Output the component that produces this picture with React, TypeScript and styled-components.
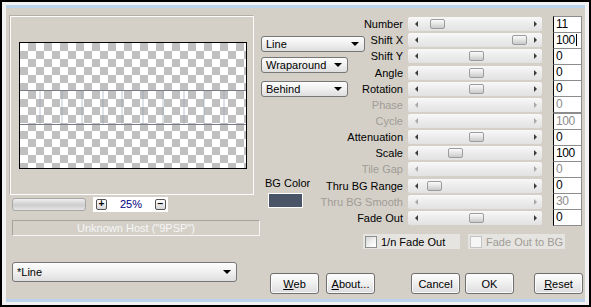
import React from 'react';
import styled, { createGlobalStyle } from 'styled-components';

const GlobalStyle = createGlobalStyle`
  html, body {
    margin: 0;
    padding: 0;
  }
  body {
    font-family: "Liberation Sans", Arial, sans-serif;
    font-size: 11px;
    color: #000;
    background: #000;
  }
`;

const Frame = styled.div`
  box-sizing: border-box;
  width: 591px;
  height: 307px;
  border: 2px solid #000;
  background: #f2f2f2;
  padding: 3px 4px;
`;

const Dialog = styled.div`
  box-sizing: border-box;
  height: 297px;
  border-top: 3px solid #bcd3ec;
  border-bottom: 3px solid #bcd3ec;
  background: #d4d0c8;
  padding: 8px 0 0 4px;
  display: flex;
`;

const LeftCol = styled.div`
  width: 250px;
  display: flex;
  flex-direction: column;
  align-items: flex-start;
`;

const GroupBox = styled.div`
  box-sizing: border-box;
  width: 244px;
  height: 179px;
  border: 1px solid #fdfdfd;
  box-shadow: -1px -1px 0 #b4b0a8;
  padding: 25px 0 0 8px;
`;

const Canvas = styled.div`
  box-sizing: border-box;
  width: 228px;
  height: 127px;
  border: 1px solid #000;
  background-color: #fff;
  background-image:
    linear-gradient(45deg, #c0c0c0 25%, transparent 25%, transparent 75%, #c0c0c0 75%),
    linear-gradient(45deg, #c0c0c0 25%, transparent 25%, transparent 75%, #c0c0c0 75%);
  background-size: 16px 16px;
  background-position: 0 0, 8px 8px;

  svg {
    display: block;
  }
`;

const ZoomRow = styled.div`
  display: flex;
  align-items: center;
  margin: 2px 0 0 2px;
  height: 14px;
`;

const ZoomSlider = styled.div`
  box-sizing: border-box;
  width: 74px;
  height: 13px;
  border: 1px solid #a8a8a8;
  border-radius: 3px;
  background: linear-gradient(#f0f0f0, #d2d2d2 45%, #cfcfcf 60%, #e6e6e6);
`;

const ZoomBox = styled.div`
  box-sizing: border-box;
  width: 75px;
  height: 15px;
  margin-left: 7px;
  background: #fff;
  display: flex;
  align-items: center;
  justify-content: space-between;
  padding: 0 2px 0 3px;
`;

const ZoomButton = styled.div`
  box-sizing: border-box;
  width: 11px;
  height: 11px;
  border: 1px solid #555;
  border-radius: 2px;
  background: linear-gradient(#fff, #d8d8d8);
  font-size: 10px;
  font-weight: bold;
  line-height: 8px;
  text-align: center;
`;

const ZoomValue = styled.span`
  color: #000080;
  font-size: 11px;
`;

const InfoField = styled.div`
  box-sizing: border-box;
  width: 248px;
  height: 16px;
  margin: 9px 0 0 2px;
  border: 1px solid #a7a39b;
  border-right-color: #f4f4f4;
  border-bottom-color: #f4f4f4;
  color: #f6f6f6;
  text-align: center;
  line-height: 14px;
`;

const Select = styled.div<{ $w: number; $h?: number }>`
  box-sizing: border-box;
  width: ${(p) => p.$w}px;
  height: ${(p) => p.$h ?? 16}px;
  display: flex;
  align-items: center;
  justify-content: space-between;
  padding: 0 5px 0 4px;
  border: 1px solid #777;
  border-radius: 3px;
  background: linear-gradient(#fdfdfd, #f0f0f0 50%, #dedede);
  font-size: 11px;
`;

const SelectArrow = styled.span`
  width: 0;
  height: 0;
  border-left: 4px solid transparent;
  border-right: 4px solid transparent;
  border-top: 4px solid #000;
`;

const BottomSelect = styled(Select)`
  margin: 26px 0 0 2px;
`;

const RightCol = styled.div`
  flex: 1;
  display: flex;
  flex-direction: column;
`;

const SliderGrid = styled.div`
  display: grid;
  grid-template-columns: 148px 145px 29px;
  grid-template-rows: repeat(13, 16.17px);
`;

const MidCol = styled.div`
  grid-column: 1;
  grid-row: 1 / span 13;
  display: flex;
  flex-direction: column;
  align-items: flex-start;
`;

const LineSelect = styled(Select)`
  margin: 20px 0 0 1px;
`;

const WrapSelect = styled(Select)`
  margin: 5px 0 0 1px;
`;

const BehindSelect = styled(Select)`
  margin: 8px 0 0 1px;
`;

const BgLabel = styled.div`
  margin: 79px 0 0 5px;
  line-height: 14px;
`;

const Swatch = styled.div`
  box-sizing: border-box;
  width: 35px;
  height: 15px;
  margin: 3px 0 0 8px;
  border: 1px solid #fff;
  background: #4a5467;
`;

const Label = styled.div<{ $row: number; $off?: boolean }>`
  grid-column: 1;
  grid-row: ${(p) => p.$row};
  justify-self: end;
  align-self: center;
  padding-right: 5px;
  line-height: 14px;
  white-space: nowrap;
  color: ${(p) => (p.$off ? '#a09c96' : '#000')};
`;

const Track = styled.div<{ $row: number }>`
  grid-column: 2;
  grid-row: ${(p) => p.$row};
  align-self: center;
  position: relative;
  width: 134px;
  height: 14px;
  border-radius: 2px;
  background: linear-gradient(#f8f8f8, #ececec 50%, #e2e2e2);
  display: flex;
  align-items: center;
  justify-content: space-between;
  padding: 0 5px 0 7px;
  box-sizing: border-box;
`;

const ArrowLeft = styled.span<{ $off?: boolean }>`
  width: 0;
  height: 0;
  border-top: 3px solid transparent;
  border-bottom: 3px solid transparent;
  border-right: 3px solid ${(p) => (p.$off ? '#a8a8a8' : '#3c3c3c')};
`;

const ArrowRight = styled.span<{ $off?: boolean }>`
  width: 0;
  height: 0;
  border-top: 3px solid transparent;
  border-bottom: 3px solid transparent;
  border-left: 3px solid ${(p) => (p.$off ? '#a8a8a8' : '#3c3c3c')};
`;

const Thumb = styled.span<{ $left: number }>`
  position: absolute;
  top: 2px;
  left: ${(p) => p.$left}px;
  box-sizing: border-box;
  width: 15px;
  height: 10px;
  border: 1px solid #9c9c9c;
  border-radius: 2px;
  background: linear-gradient(#fbfbfb, #e4e4e4 50%, #c9c9c9);
`;

const ValueBox = styled.div<{ $row: number; $off?: boolean }>`
  grid-column: 3;
  grid-row: ${(p) => p.$row};
  align-self: center;
  box-sizing: border-box;
  width: 29px;
  height: 17px;
  background: #fff;
  border: 1px solid #8c8c8c;
  border-left-color: #000;
  padding-left: 2px;
  font-size: 12px;
  line-height: 15px;
  letter-spacing: -0.4px;
  color: ${(p) => (p.$off ? '#8c8c8c' : '#000')};
  display: flex;
  align-items: center;
`;

const Caret = styled.span`
  width: 1px;
  height: 12px;
  margin-left: 1px;
  background: #000;
`;

const CheckRow = styled.div`
  display: flex;
  margin: 8px 0 0 103px;
  gap: 8px;
`;

const CheckPanel = styled.div<{ $off?: boolean }>`
  box-sizing: border-box;
  width: 97px;
  height: 15px;
  background: #e6e4e0;
  display: flex;
  align-items: center;
  padding-left: 2px;
  gap: 4px;
  color: ${(p) => (p.$off ? '#a09c96' : '#000')};
  white-space: nowrap;
`;

const CheckBox = styled.span<{ $off?: boolean }>`
  box-sizing: border-box;
  width: 12px;
  height: 12px;
  border: 1px solid ${(p) => (p.$off ? '#c4c4c4' : '#8e8f8f')};
  background: ${(p) =>
    p.$off ? '#f6f6f6' : 'linear-gradient(135deg, #d8d8d8, #f8f8f8 70%, #fff)'};
`;

const ButtonRow = styled.div`
  display: flex;
  margin: 24px 0 0 10px;
`;

const Button = styled.div<{ $gap: number }>`
  box-sizing: border-box;
  width: 49px;
  height: 21px;
  margin-left: ${(p) => p.$gap}px;
  border: 1px solid #707070;
  border-radius: 3px;
  background: linear-gradient(#fefefe, #efefef 50%, #dcdcdc);
  box-shadow: inset 0 0 0 1px #fafafa;
  display: flex;
  align-items: center;
  justify-content: center;
  font-size: 11px;
`;

type Row = { label: string; value: string; thumb?: number; off?: boolean; caret?: boolean };

const rows: Row[] = [
  { label: 'Number', value: '11', thumb: 22 },
  { label: 'Shift X', value: '100', thumb: 104, caret: true },
  { label: 'Shift Y', value: '0', thumb: 61 },
  { label: 'Angle', value: '0', thumb: 61 },
  { label: 'Rotation', value: '0', thumb: 61 },
  { label: 'Phase', value: '0', off: true },
  { label: 'Cycle', value: '100', off: true },
  { label: 'Attenuation', value: '0', thumb: 61 },
  { label: 'Scale', value: '100', thumb: 40 },
  { label: 'Tile Gap', value: '0', off: true },
  { label: 'Thru BG Range', value: '0', thumb: 19 },
  { label: 'Thru BG Smooth', value: '30', off: true },
  { label: 'Fade Out', value: '0', thumb: 61 },
];

const bars = [19, 41, 61, 82, 101, 122, 142, 163, 183, 203];

function Preview() {
  return (
    <Canvas>
      <svg width="226" height="125" viewBox="0 0 226 125">
        {bars.map((x) => (
          <rect key={x} x={x} y={48} width={2} height={33} fill="#8e9ab2" opacity={0.3} />
        ))}
        <line x1="0" y1="47.5" x2="226" y2="47.5" stroke="#787c86" />
        <line x1="0" y1="81.5" x2="226" y2="81.5" stroke="#787c86" />
      </svg>
    </Canvas>
  );
}

export default function App() {
  return (
    <>
      <GlobalStyle />
      <Frame>
        <Dialog>
          <LeftCol>
            <GroupBox>
              <Preview />
            </GroupBox>
            <ZoomRow>
              <ZoomSlider />
              <ZoomBox>
                <ZoomButton>+</ZoomButton>
                <ZoomValue>25%</ZoomValue>
                <ZoomButton>−</ZoomButton>
              </ZoomBox>
            </ZoomRow>
            <InfoField>Unknown Host ("9PSP")</InfoField>
            <BottomSelect $w={225} $h={20}>
              <span>*Line</span>
              <SelectArrow />
            </BottomSelect>
          </LeftCol>

          <RightCol>
            <SliderGrid>
              <MidCol>
                <LineSelect $w={104}>
                  <span>Line</span>
                  <SelectArrow />
                </LineSelect>
                <WrapSelect $w={87}>
                  <span>Wraparound</span>
                  <SelectArrow />
                </WrapSelect>
                <BehindSelect $w={87}>
                  <span>Behind</span>
                  <SelectArrow />
                </BehindSelect>
                <BgLabel>BG Color</BgLabel>
                <Swatch />
              </MidCol>
              {rows.map((r, i) => (
                <React.Fragment key={r.label}>
                  <Label $row={i + 1} $off={r.off}>
                    {r.label}
                  </Label>
                  <Track $row={i + 1}>
                    <ArrowLeft $off={r.off} />
                    {r.thumb !== undefined && <Thumb $left={r.thumb} />}
                    <ArrowRight $off={r.off} />
                  </Track>
                  <ValueBox $row={i + 1} $off={r.off}>
                    {r.value}
                    {r.caret && <Caret />}
                  </ValueBox>
                </React.Fragment>
              ))}
            </SliderGrid>

            <CheckRow>
              <CheckPanel>
                <CheckBox />
                1/n Fade Out
              </CheckPanel>
              <CheckPanel $off>
                <CheckBox $off />
                Fade Out to BG
              </CheckPanel>
            </CheckRow>

            <ButtonRow>
              <Button $gap={0}>
                <u>W</u>eb
              </Button>
              <Button $gap={7}>
                <u>A</u>bout...
              </Button>
              <Button $gap={36}>Cancel</Button>
              <Button $gap={5}>OK</Button>
              <Button $gap={20}>
                <u>R</u>eset
              </Button>
            </ButtonRow>
          </RightCol>
        </Dialog>
      </Frame>
    </>
  );
}
